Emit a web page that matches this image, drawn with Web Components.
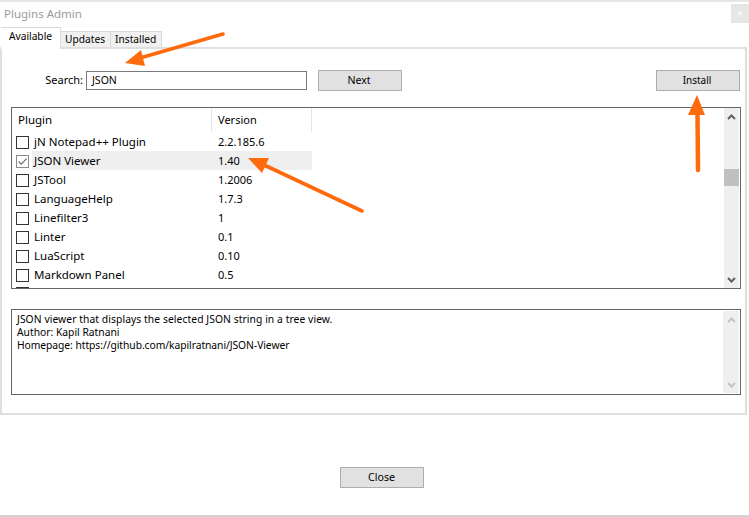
<!DOCTYPE html>
<html lang="en">
<head>
<meta charset="utf-8">
<title>Plugins Admin</title>
<style>
html,body{margin:0;padding:0;background:#fff}
body{width:749px;height:517px;overflow:hidden;font:11px/1 "Noto Sans","Open Sans",sans-serif;color:#000}
</style>
</head>
<body>
<plugins-dialog>
  <tab-item slot="tabs" active>Available</tab-item>
  <tab-item slot="tabs">Updates</tab-item>
  <tab-item slot="tabs">Installed</tab-item>

  <search-bar slot="search"></search-bar>

  <plugin-list slot="list">
    <plugin-row version="2.2.185.6">jN Notepad++ Plugin</plugin-row>
    <plugin-row version="1.40" checked selected>JSON Viewer</plugin-row>
    <plugin-row version="1.2006">JSTool</plugin-row>
    <plugin-row version="1.7.3">LanguageHelp</plugin-row>
    <plugin-row version="1">Linefilter3</plugin-row>
    <plugin-row version="0.1">Linter</plugin-row>
    <plugin-row version="0.10">LuaScript</plugin-row>
    <plugin-row version="0.5">Markdown Panel</plugin-row>
    <plugin-row peek></plugin-row>
  </plugin-list>

  <desc-box slot="desc">
    <div style="letter-spacing:.075px">JSON viewer that displays the selected JSON string in a tree view.</div>
    <div>Author: Kapil Ratnani</div>
    <div style="letter-spacing:-.055px">Homepage: https://github.com/kapilratnani/JSON-Viewer</div>
  </desc-box>

  <win-button slot="close">Close</win-button>
</plugins-dialog>
<arrow-overlay></arrow-overlay>

<script>
function define(name, css, html, extra) {
  customElements.define(name, class extends HTMLElement {
    constructor() {
      super();
      this.attachShadow({mode: 'open'}).innerHTML = '<style>' + css + '</style>' + html;
    }
    connectedCallback() { if (extra) extra.call(this); }
  });
}

define('plugins-dialog', `
  :host{display:flex;flex-direction:column;box-sizing:border-box;width:749px;height:517px;
    border-top:2px solid #e6e6e6;border-bottom:2px solid #d2d2d2;background:#fff}
  .title{flex:none;height:25px;display:flex;justify-content:space-between;padding:2px 0 0 4px;box-sizing:border-box}
  .title span{color:#9a9a9a;font-size:11.5px;line-height:20px}
  .x{width:18px;height:19px;background:#e6e6e6;color:#fff;font-size:11px;line-height:18px;text-align:center}
  .tabs{flex:none;height:20px;display:flex;align-items:flex-start;padding-left:1px;position:relative;z-index:1}
  .panel{flex:none;box-sizing:border-box;width:747px;height:368px;border:2px solid #dfdfdf;
    padding:21px 4px 0 9px;display:flex;flex-direction:column}
  ::slotted([slot=list]){margin-top:16px}
  ::slotted([slot=desc]){margin-top:20px}
  .foot{flex:1;display:flex;justify-content:center;align-items:flex-start;padding:52px 0 0 14px}
`, `
  <div class="title"><span>Plugins Admin</span><div class="x">×</div></div>
  <div class="tabs"><slot name="tabs"></slot></div>
  <div class="panel">
    <slot name="search"></slot>
    <slot name="list"></slot>
    <slot name="desc"></slot>
  </div>
  <div class="foot"><slot name="close"></slot></div>
`);

define('tab-item', `
  :host{display:block;box-sizing:border-box;height:16px;margin-top:4px;padding:0 5px 0 4px;background:#f0f0f0;
    border:1px solid #d9d9d9;border-bottom:none;border-left:none;line-height:15px;font-size:10.2px;color:#000}
  :host([active]){height:22px;margin-top:0;background:#fff;padding:0 8px 0 8px;line-height:16px;border-left:none;border-right:1px solid #dfdfdf}
`, `<slot></slot>`);

define('win-button', `
  :host{display:block;box-sizing:border-box;width:84px;height:21px;background:#e1e1e1;border:1px solid #adadad;
    text-align:center;line-height:19px;font-size:10.6px;color:#000}
`, `<slot></slot>`);

define('search-bar', `
  :host{display:flex;align-items:flex-start;height:21px}
  label{width:75px;padding-right:3px;box-sizing:border-box;text-align:right;line-height:20px}
  .input{box-sizing:border-box;width:221px;height:19px;margin-top:1px;border:1px solid #7a7a7a;padding-left:5px;line-height:17px;background:#fff;font-size:10.5px}
  win-button{margin-left:11px;padding-right:2px}
  .sp{flex:1}
  win-button.i{margin:0 1px 0 0;font-size:10px}
`, `
  <label>Search:</label>
  <div class="input">JSON</div>
  <win-button>Next</win-button>
  <div class="sp"></div>
  <win-button class="i">Install</win-button>
`);

define('plugin-list', `
  :host{display:flex;box-sizing:border-box;width:730px;height:182px;border:1px solid #666;background:#fff;overflow:hidden}
  .main{flex:1;min-width:0;height:180px;overflow:hidden}
  .head{display:flex;height:24px;line-height:23px}
  .head div{box-sizing:border-box;border-right:1px solid #e5e5e5;padding-left:6px}
  .head .a{width:200px;font-size:11.5px}
  .head .b{width:100px;font-size:11px}
  scroll-rail{margin-right:1px}
`, `
  <div class="main">
    <div class="head"><div class="a">Plugin</div><div class="b">Version</div></div>
    <slot></slot>
  </div>
  <scroll-rail thumb></scroll-rail>
`);

define('plugin-row', `
  :host{display:flex;height:19px;line-height:19px}
  .box{flex:none;box-sizing:border-box;width:13px;height:13px;margin:4px 0 0 4px;border:1px solid #333;background:#fff;display:flex}
  :host([checked]) .box{border-color:#8a8a8a}
  :host([peek]) .box{margin-top:3px}
  .name{width:180px;box-sizing:border-box;margin-left:3px;padding-left:2px;font-size:11.5px}
  .ver{width:100px;box-sizing:border-box;padding-left:6px;font-size:11px}
  :host([selected]) .name,:host([selected]) .ver{background:#efefef}
  svg{display:block}
`, `
  <div class="box"></div>
  <div class="name"><slot></slot></div>
  <div class="ver"></div>
`, function () {
  const s = this.shadowRoot;
  s.querySelector('.ver').textContent = this.getAttribute('version') || '';
  if (this.hasAttribute('checked')) {
    s.querySelector('.box').innerHTML = '<svg width="11" height="11" viewBox="0 0 11 11"><path d="M1.5 5.5 L4.2 8.2 L9.6 2.6" fill="none" stroke="#6e6e6e" stroke-width="1.2"/></svg>';
  }
  if (this.hasAttribute('peek')) {
    s.querySelector('.name').remove(); s.querySelector('.ver').remove();
  }
});

define('scroll-rail', `
  :host{display:flex;flex-direction:column;justify-content:space-between;flex:none;width:15px;background:#efefef;position:relative;padding:6px 0 5px;box-sizing:border-box}
  svg{display:block;margin:0 auto}
  .t{position:absolute;left:0;top:61px;width:15px;height:17px;background:#c0c0c0;display:none}
  :host([thumb]) .t{display:block}
  path{fill:none;stroke:#606060;stroke-width:2}
  :host([dim]) path{stroke:#c4c4c4}
`, `
  <svg width="9" height="6" viewBox="0 0 9 6"><path d="M1 5 L4.5 1.5 L8 5"/></svg>
  <div class="t"></div>
  <svg width="9" height="6" viewBox="0 0 9 6"><path d="M1 1 L4.5 4.5 L8 1"/></svg>
`);

define('desc-box', `
  :host{display:flex;align-items:flex-start;box-sizing:border-box;width:730px;height:86px;border:1px solid #666;background:#fff;padding:1px 1px 1px 0}
  .txt{flex:1;padding:2px 0 0 5px;line-height:13px;font-size:10.3px}
  scroll-rail{width:16px;height:82px}
`, `
  <div class="txt"><slot></slot></div>
  <scroll-rail dim></scroll-rail>
`);

define('arrow-overlay', `
  :host{position:absolute;left:0;top:0;width:749px;height:517px;pointer-events:none}
  svg{display:block}
`, `
  <svg width="749" height="517" viewBox="0 0 749 517">
    <g fill="#ff6a0d" stroke="#ff6a0d" stroke-linecap="round">
      <path d="M223 34 L140 58" stroke-width="3.6" fill="none"/>
      <path d="M125 63 L141 50 L145 66 Z" stroke-width="0"/>
      <path d="M362 211 L262 164" stroke-width="3.6" fill="none"/>
      <path d="M248 158 L269 158 L262 173 Z" stroke-width="0"/>
      <path d="M697.5 114 L698 170" stroke-width="4.5" fill="none"/>
      <path d="M697 95 L705 115 L688 115 Z" stroke-width="0"/>
    </g>
  </svg>
`);
</script>
</body>
</html>
